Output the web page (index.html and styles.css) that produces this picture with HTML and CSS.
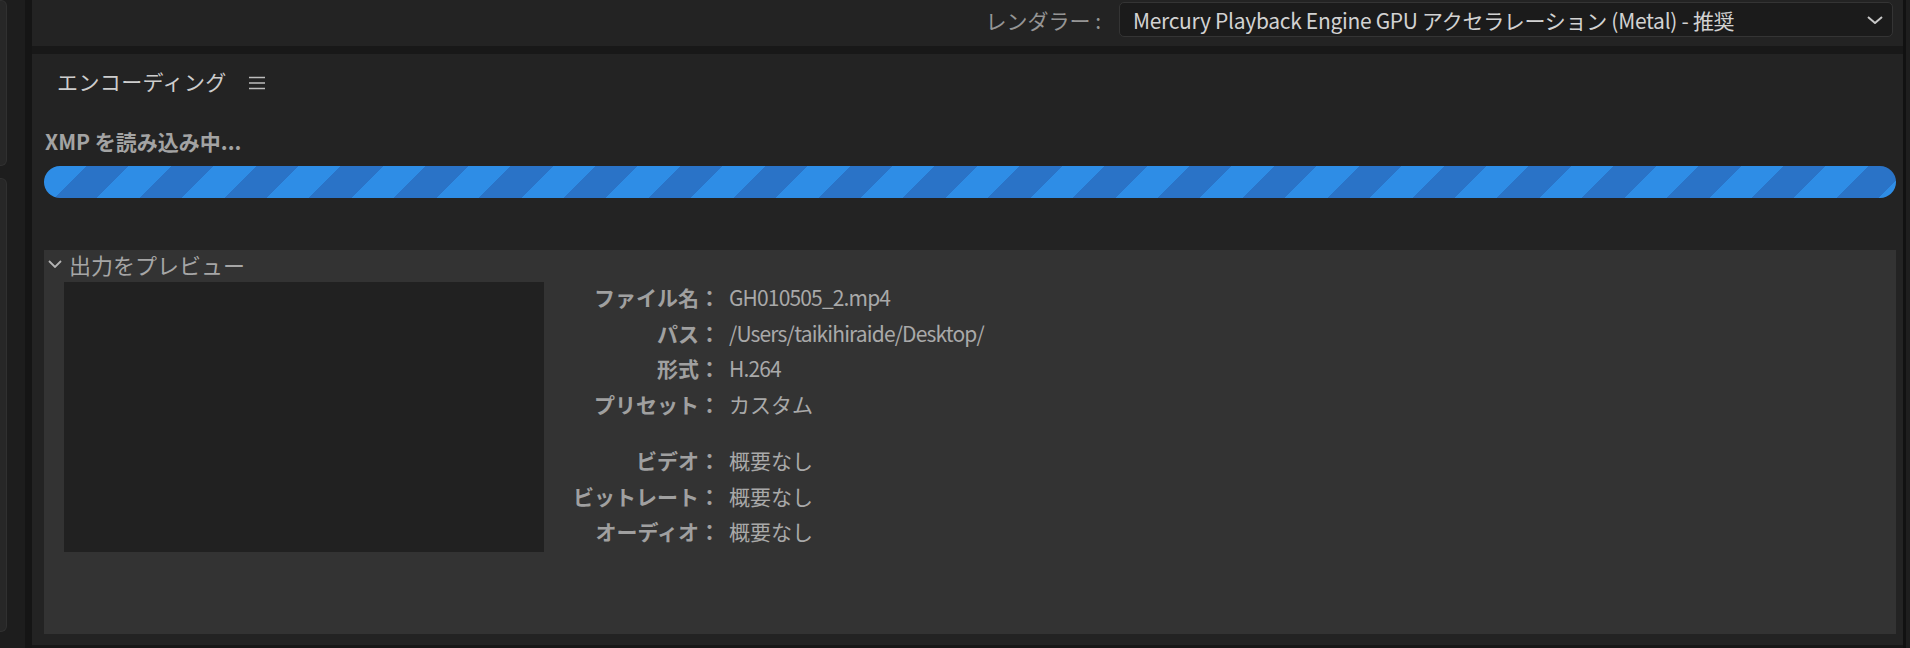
FILE: index.html
```html
<!DOCTYPE html>
<html lang="ja">
<head>
  <meta charset="UTF-8" />
  <title>エンコーディング</title>
  <meta name="viewport" content="width=device-width, initial-scale=1.0"/>
  <link rel="stylesheet" href="styles.css">
</head>
<body>

<div class="app">
  <aside class="rail">
    <div class="rail-box rail-top"></div>
    <div class="rail-box rail-bottom"></div>
  </aside>
  <div class="seam"></div>

  <main class="main">
    <div class="topbar">
      <span class="renderer-label">レンダラー :</span>
      <div class="select">
        <span>Mercury Playback Engine GPU アクセラレーション (Metal) - 推奨</span>
        <svg class="caret" width="16" height="8" viewBox="0 0 16 8"><path d="M1 1l7 6 7-6"/></svg>
      </div>
    </div>

    <section class="encoding">
      <div class="panel-head">
        <h2>エンコーディング</h2>
        <svg class="menu" width="16" height="14" viewBox="0 0 16 14"><path d="M0 1.5h16M0 7h16M0 12.5h16"/></svg>
      </div>

      <div class="status">XMP を読み込み中...</div>
      <div class="progress"></div>

      <div class="preview">
        <div class="preview-head">
          <svg class="chev" width="14" height="8" viewBox="0 0 14 8"><path d="M1 1l6 6 6-6"/></svg>
          <span>出力をプレビュー</span>
        </div>
        <div class="preview-body">
          <div class="thumb"></div>
          <dl class="info">
            <dt>ファイル名：</dt><dd class="latin">GH010505_2.mp4</dd>
            <dt>パス：</dt><dd class="latin">/Users/taikihiraide/Desktop/</dd>
            <dt>形式：</dt><dd class="latin">H.264</dd>
            <dt>プリセット：</dt><dd>カスタム</dd>
            <dt class="gap">ビデオ：</dt><dd class="gap">概要なし</dd>
            <dt>ビットレート：</dt><dd>概要なし</dd>
            <dt>オーディオ：</dt><dd>概要なし</dd>
          </dl>
        </div>
      </div>
    </section>
  </main>

  <div class="seam-r"></div>
  <div class="rail-r"></div>
</div>

</body>
</html>
```

FILE: styles.css
```css
* { box-sizing: border-box; }
body {
  margin: 0; background: #161616; color: #a8a8a8;
  font-family: "Noto Sans CJK JP", "Noto Sans", sans-serif;
}
.app { display: flex; width: 1910px; height: 648px; overflow: hidden; }

/* side rails */
.rail { width: 25px; background: #1d1d1d; }
.rail-box {
  width: 7px; background: #272727;
  border: 1px solid #303030; border-left: 0; border-radius: 0 6px 6px 0;
}
.rail-top { height: 166px; }
.rail-bottom { height: 454px; margin-top: 12px; }
.seam { width: 7px; background: #151515; }
.seam-r { width: 3px; background: #111; }
.rail-r { width: 4px; background: #1e1e1e; }

.main { flex: 1; display: flex; flex-direction: column; gap: 8px; background: #181818; }

/* renderer bar */
.topbar {
  height: 46px; background: #232323;
  display: flex; justify-content: flex-end; align-items: flex-start;
  padding: 2px 10px 0 0;
}
.renderer-label { font-size: 21px; line-height: 36px; color: #959595; margin-right: 18px; }
.select {
  width: 774px; height: 35px;
  display: flex; align-items: center; justify-content: space-between;
  padding: 0 9px 0 13px;
  background: #1b1b1b; border: 1px solid #343434; border-radius: 5px;
  font-size: 21px; color: #d2d2d2; letter-spacing: -0.3px;
}
.caret path { fill: none; stroke: #c8c8c8; stroke-width: 2; }

/* encoding panel */
.encoding {
  flex: 1; display: flex; flex-direction: column;
  background: #232323; padding: 0 7px 11px 12px;
  border-bottom: 3px solid #171717;
}
.panel-head { display: flex; align-items: center; height: 28px; margin-top: 13px; padding-left: 13px; }
.panel-head h2 { margin: 0; font-size: 21px; font-weight: 400; line-height: 28px; color: #cdcdcd; letter-spacing: 0.4px; }
.menu { margin-left: 22px; margin-top: 3px; }
.menu path { stroke: #bdbdbd; stroke-width: 1.6; }

.status { margin-top: 32px; padding-left: 1px; font-size: 21px; line-height: 28px; font-weight: 700; color: #a3a3a3; }
.progress {
  height: 32px; margin-top: 11px; border-radius: 16px;
  background: repeating-linear-gradient(135deg, #2e8de6 0 30px, #2a73c7 30px 60px);
}

/* output preview */
.preview { flex: 1; margin-top: 52px; background: #333333; }
.preview-head { display: flex; align-items: center; height: 28px; padding-left: 4px; font-size: 22px; color: #a6a6a6; }
.chev { margin-right: 7px; }
.chev path { fill: none; stroke: #b4b4b4; stroke-width: 1.8; }
.preview-body { display: flex; align-items: flex-start; margin-top: 4px; padding-left: 20px; }
.thumb { width: 480px; height: 270px; background: #212121; }

.info {
  display: grid; grid-template-columns: 160px auto; column-gap: 9px;
  margin: -2px 0 0 16px; font-size: 21px; line-height: 35.5px;
}
.info dt { text-align: right; font-weight: 700; color: #a0a0a0; }
.info dd { margin: 0; color: #a9a9a9; }
.info .latin { letter-spacing: -0.85px; }
.info .gap { margin-top: 21px; }
```
